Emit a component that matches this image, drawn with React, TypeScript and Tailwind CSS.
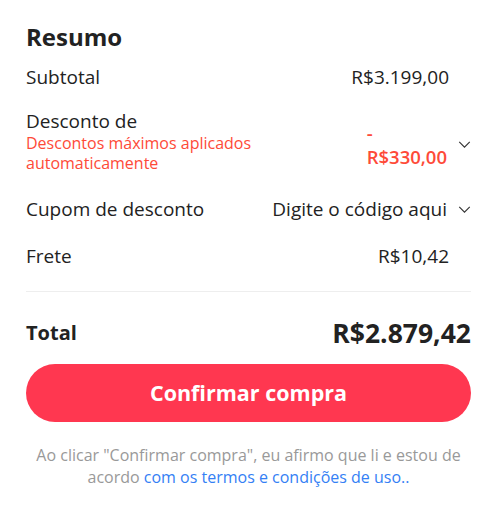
import { FC } from 'react';

const Chevron: FC<{ className?: string }> = ({ className }) => (
	<svg viewBox="0 0 14 8" className={className} fill="none" stroke="currentColor" strokeWidth="1.3">
		<path d="M1 1l6 6 6-6" />
	</svg>
);

const App: FC = () => {
	return (
		<div className="bg-white pl-[26px] pr-[29px] pt-[21px] pb-4 font-['Open_Sans',sans-serif] text-[#222]">
			<h2 className="text-[24px] leading-[32px] font-bold">Resumo</h2>

			<div className="mt-[12px] flex items-center justify-between pr-[22px] text-[19px] leading-[24px]">
				<span>Subtotal</span>
				<span>R$3.199,00</span>
			</div>

			<div className="mt-[20px] flex items-center justify-between">
				<div>
					<div className="text-[19px] leading-[24px]">Desconto de</div>
					<div className="text-[16px] leading-[20px] text-[#fe4a38]">
						Descontos máximos aplicados
						<br />
						automaticamente
					</div>
				</div>
				<div className="mt-[8px] flex items-center">
					<div className="flex flex-col items-start text-[18.5px] leading-[24px] font-semibold text-[#fe4a38]">
						<span>-</span>
						<span>R$330,00</span>
					</div>
					<Chevron className="ml-[11px] mt-[-2px] h-[7px] w-[13px] text-[#333]" />
				</div>
			</div>

			<div className="mt-[24px] flex items-center justify-between text-[19px] leading-[24px]">
				<span>Cupom de desconto</span>
				<span className="flex items-center">
					Digite o código aqui
					<Chevron className="ml-[11px] h-[7px] w-[13px] text-[#333]" />
				</span>
			</div>

			<div className="mt-[23px] flex items-center justify-between pr-[22px] text-[19px] leading-[24px]">
				<span>Frete</span>
				<span>R$10,42</span>
			</div>

			<div className="mt-[23px] h-px bg-[#eeeeee]" />

			<div className="mt-[25px] flex items-center justify-between">
				<span className="text-[20px] leading-[28px] font-bold">Total</span>
				<span className="text-[26.5px] leading-[32px] font-bold">R$2.879,42</span>
			</div>

			<button className="mt-[15px] h-[58px] w-full rounded-full bg-[#ff3750] text-[21.5px] font-bold text-white">
				Confirmar compra
			</button>

			<p className="mt-[22px] text-center text-[16px] leading-[22px] text-[#999]">
				<span>Ao clicar "Confirmar compra", eu afirmo que li e estou de acordo</span>{' '}
				<a className="text-[#3480f5]" href="#">
					com os termos e condições de uso..
				</a>
			</p>
		</div>
	);
};

export default App;
